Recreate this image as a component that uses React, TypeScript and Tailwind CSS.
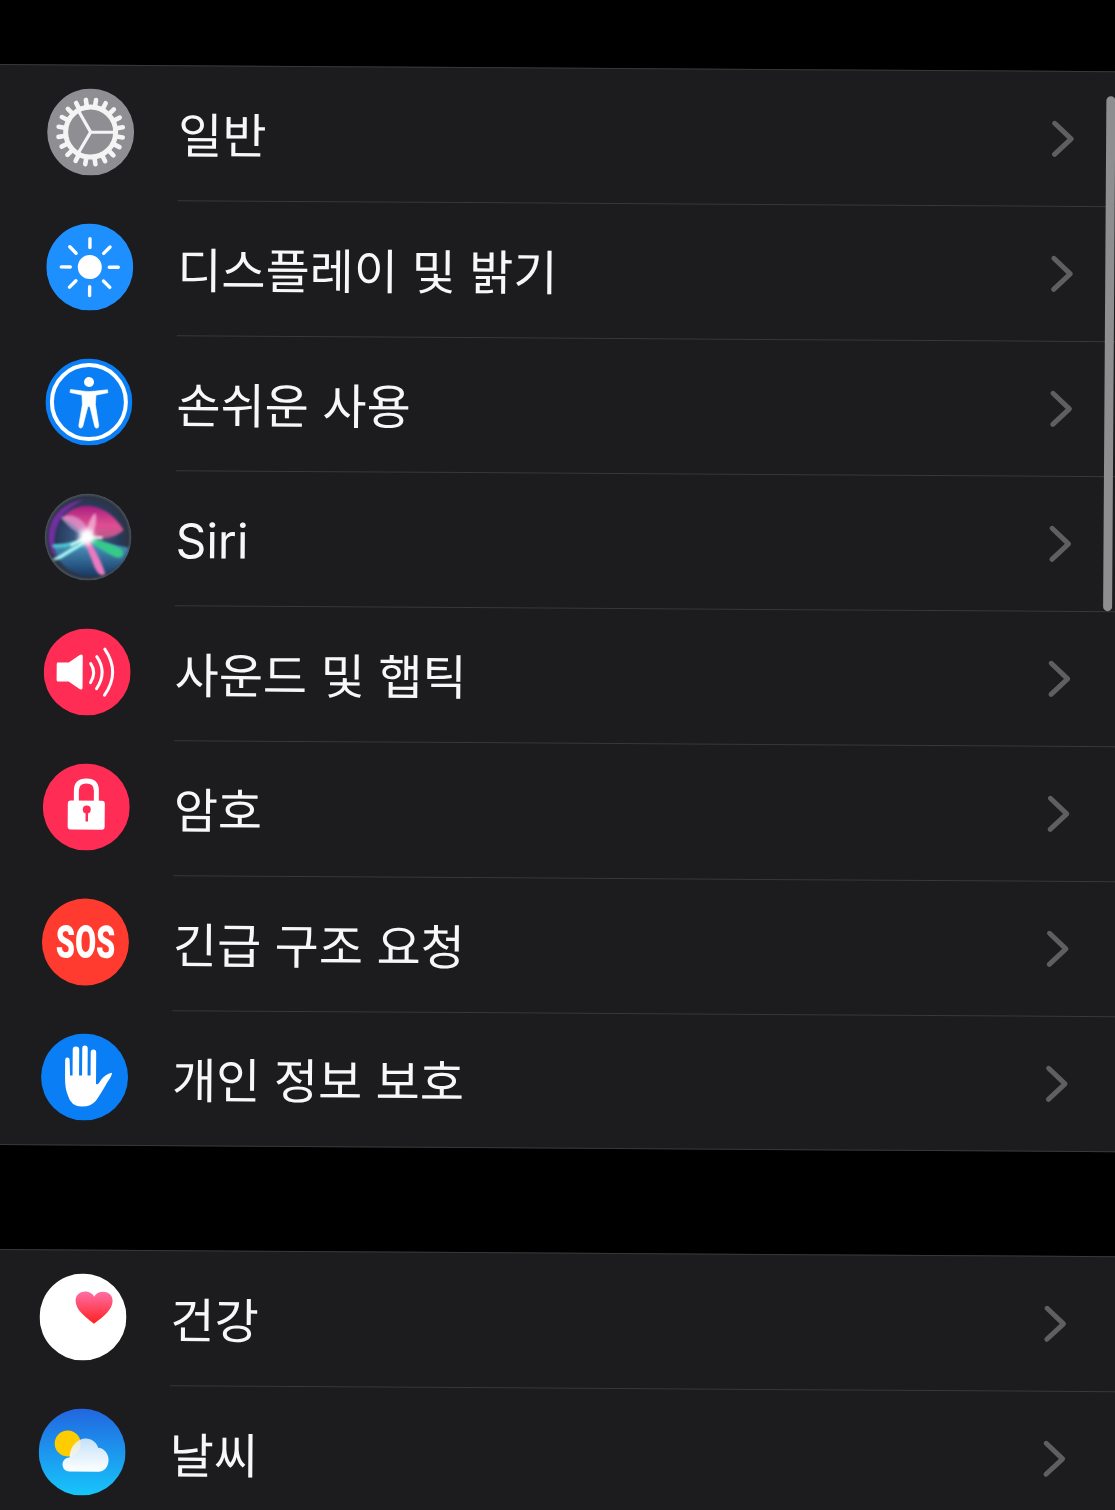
import React from "react";

const C = 43.5;

function Gear() {
  const teeth = Array.from({ length: 20 }, (_, i) => (i * 18 * Math.PI) / 180 + 0.16);
  return (
    <svg viewBox="0 0 87 87" className="w-[87px] h-[87px] block">
      <circle cx={C} cy={C} r={43.5} fill="#8e8e93" />
      <circle cx={C} cy={C} r={25} fill="none" stroke="#f4f4f5" strokeWidth={5} />
      {teeth.map((a, i) => (
        <line key={i} x1={C + 25 * Math.cos(a)} y1={C + 25 * Math.sin(a)} x2={C + 32.5 * Math.cos(a)} y2={C + 32.5 * Math.sin(a)} stroke="#f4f4f5" strokeWidth={4.6} strokeLinecap="round" />
      ))}
      <path d="M43.5 43.5 L68 43.5 M43.5 43.5 L31 22 M43.5 43.5 L31 65" stroke="#f4f4f5" strokeWidth={3.2} fill="none" />
    </svg>
  );
}

function Sun() {
  const rays = Array.from({ length: 8 }, (_, i) => (i * 45 * Math.PI) / 180);
  return (
    <svg viewBox="0 0 87 87" className="w-[87px] h-[87px] block">
      <circle cx={C} cy={C} r={43.5} fill="#1e8fff" />
      <circle cx={C} cy={C} r={12} fill="#fff" />
      {rays.map((a, i) => (
        <line key={i} x1={C + 19.5 * Math.cos(a)} y1={C + 19.5 * Math.sin(a)} x2={C + 28.5 * Math.cos(a)} y2={C + 28.5 * Math.sin(a)} stroke="#fff" strokeWidth={3.4} strokeLinecap="round" />
      ))}
    </svg>
  );
}

function Access() {
  return (
    <svg viewBox="0 0 87 87" className="w-[87px] h-[87px] block">
      <circle cx={C} cy={C} r={43.5} fill="#0a7ff5" />
      <circle cx={C} cy={C} r={37} fill="none" stroke="#fff" strokeWidth={4} />
      <circle cx={C} cy={23.5} r={5} fill="#fff" />
      <path d="M25 31 L37 32.5 Q43.5 33.5 50 32.5 L62 31 L62.5 34 L50.5 36.5 L50 46 L53.5 67 Q53.5 69.5 51.5 69.5 Q50 69.5 49.5 68 L44.5 48 L42.5 48 L37.5 68 Q37 69.5 35.5 69.5 Q33.5 69.5 33.5 67 L37 46 L36.5 36.5 L24.5 34 Z" fill="#fff" stroke="#fff" strokeWidth={0.6} strokeLinejoin="round" />
    </svg>
  );
}

function Siri() {
  return (
    <svg viewBox="0 0 87 87" className="w-[87px] h-[87px] block">
      <defs>
        <clipPath id="siriClip"><circle cx={C} cy={C} r={43.5} /></clipPath>
        <radialGradient id="siriBg" cx="50%" cy="50%" r="50%">
          <stop offset="0%" stopColor="#4a6a9a" />
          <stop offset="72%" stopColor="#263a5c" />
          <stop offset="92%" stopColor="#2c3444" />
          <stop offset="100%" stopColor="#4c555c" />
        </radialGradient>
        <linearGradient id="siriTop" x1="0" y1="0" x2="0" y2="1">
          <stop offset="0%" stopColor="#a81e7e" />
          <stop offset="60%" stopColor="#e04e92" />
          <stop offset="100%" stopColor="#b85a8a" />
        </linearGradient>
        <linearGradient id="siriLow" x1="0" y1="0" x2="0" y2="1">
          <stop offset="0%" stopColor="#4a97c0" />
          <stop offset="100%" stopColor="#1a3a66" />
        </linearGradient>
        <filter id="b1" x="-30%" y="-30%" width="160%" height="160%"><feGaussianBlur stdDeviation="1" /></filter>
        <filter id="b2" x="-60%" y="-60%" width="220%" height="220%"><feGaussianBlur stdDeviation="2.5" /></filter>
      </defs>
      <g clipPath="url(#siriClip)">
        <circle cx={C} cy={C} r={43.5} fill="url(#siriBg)" />
        <path d="M4 44 C4 20 22 8 40 6 C22 14 12 26 10 44 C9 52 10 60 14 66 C8 62 4 54 4 44 Z" fill="#7a2fa8" opacity={0.9} filter="url(#b1)" />
        <path d="M18 26 C26 8 60 4 79 36 C72 44 58 46 48 44 C36 40 28 28 18 26 Z" fill="url(#siriTop)" filter="url(#b1)" />
        <path d="M9 52 C25 52 50 46 84 54 C82 72 62 84 42 82 C24 80 12 68 9 52 Z" fill="url(#siriLow)" filter="url(#b1)" />
        <path d="M16 24 C30 18 40 26 47 43 C36 44 24 34 16 24 Z" fill="#dcb0e0" opacity={0.6} filter="url(#b1)" />
        <path d="M40 42 C44 28 49 18 51 20 C53 28 50 36 46 45 Z" fill="#f8c0e0" opacity={0.7} filter="url(#b1)" />
        <path d="M44 43 C54 46 68 50 78 56 C81 64 74 66 68 62 C60 58 50 52 44 46 Z" fill="#34c98a" filter="url(#b1)" />
        <path d="M44 42 C32 52 18 60 8 66 C10 68 16 66 20 63 C28 58 38 52 46 46 Z" fill="#a8fbf6" filter="url(#b1)" />
        <path d="M8 51 C20 51 32 48 42 42 L44 46 C32 52 20 55 8 54 Z" fill="#4ed6d8" opacity={0.85} filter="url(#b1)" />
        <path d="M42 44 C50 54 57 68 61 80 C57 84 53 79 50 73 C46 62 42 54 39 46 Z" fill="#ee78c0" filter="url(#b1)" />
        <circle cx={42} cy={43.5} r={8} fill="#fff" filter="url(#b2)" />
        <path d="M26 52 L42 44 L58 44" stroke="#fff" strokeWidth={3} fill="none" opacity={0.8} filter="url(#b1)" />
      </g>
    </svg>
  );
}

function Speaker() {
  return (
    <svg viewBox="0 0 87 87" className="w-[87px] h-[87px] block">
      <circle cx={C} cy={C} r={43.5} fill="#ff2d55" />
      <path d="M14.5 34 L25 34 L36 26.5 Q39 25 39 28 L39 59 Q39 62 36 60.5 L25 53 L14.5 53 Q13 53 13 51.5 L13 35.5 Q13 34 14.5 34 Z" fill="#fff" />
      <path d="M47 35 Q53 43.5 47 54 M53 28 Q64 43.5 53 60 M61 20.5 Q77 43.5 61 66.5" fill="none" stroke="#fff" strokeWidth={3} strokeLinecap="round" />
    </svg>
  );
}

function Lock() {
  return (
    <svg viewBox="0 0 87 87" className="w-[87px] h-[87px] block">
      <circle cx={C} cy={C} r={43.5} fill="#ff2d55" />
      <path d="M33.5 38 L33.5 27 Q33.5 17.5 43.5 17.5 Q53.5 17.5 53.5 27 L53.5 38" fill="none" stroke="#fff" strokeWidth={5} />
      <rect x={25} y={37} width={37} height={29} rx={3} fill="#fff" />
      <circle cx={44} cy={46} r={4} fill="#ff2d55" />
      <rect x={42.8} y={47} width={2.5} height={11} fill="#ff2d55" />
    </svg>
  );
}

function Sos() {
  return (
    <div className="w-[87px] h-[87px] rounded-full bg-[#ff3b30] flex items-center justify-center overflow-hidden">
      <span className="font-['Roboto',sans-serif] font-black text-[45px] leading-none text-white scale-x-[0.68] tracking-[0px]">SOS</span>
    </div>
  );
}

function Hand() {
  return (
    <svg viewBox="0 0 87 87" className="w-[87px] h-[87px] block">
      <circle cx={C} cy={C} r={43.5} fill="#0a7ff5" />
      <path d="M24 27 Q24 24 26 24 Q28.5 24 28.5 27 L29 42 L31.5 42 L31.5 16 Q31.5 13 34.5 13 Q38 13 38 16 L38 42 L41 42 L41 15 Q41 12 43.5 12 Q46.5 12 46.5 15 L46.5 42 L49.5 42 L49.5 19 Q49.5 16 52 16 Q55 16 55 19 L55 50 Q57 52 60 46 Q65 40 71 39 Q71 42 66 49 Q60 60 55 67 Q50 73 41 73 Q30 73 27 62 Q24 55 24 45 Z" fill="#fff" />
    </svg>
  );
}

function Health() {
  return (
    <svg viewBox="0 0 87 87" className="w-[87px] h-[87px] block">
      <defs>
        <linearGradient id="heart" x1="0" y1="0" x2="0" y2="1">
          <stop offset="0%" stopColor="#ff6fa8" />
          <stop offset="100%" stopColor="#ff2020" />
        </linearGradient>
      </defs>
      <circle cx={C} cy={C} r={43.5} fill="#fff" />
      <path d="M54.5 50 C45 43 36 36 36 27 C36 21 41 18 45.5 18 C49.5 18 53 20 54.5 23 C56 20 59.5 18 63.5 18 C68 18 73 21 73 27 C73 36 64 43 54.5 50 Z" fill="url(#heart)" />
    </svg>
  );
}

function Weather() {
  return (
    <svg viewBox="0 0 87 87" className="w-[87px] h-[87px] block">
      <defs>
        <linearGradient id="sky" x1="0" y1="0" x2="0" y2="1">
          <stop offset="0%" stopColor="#2266e0" />
          <stop offset="100%" stopColor="#17c6fb" />
        </linearGradient>
        <linearGradient id="cloud" x1="0" y1="0" x2="0" y2="1">
          <stop offset="0%" stopColor="#e4f0fb" stopOpacity={0.85} />
          <stop offset="100%" stopColor="#ffffff" />
        </linearGradient>
      </defs>
      <circle cx={C} cy={C} r={43.5} fill="url(#sky)" />
      <circle cx={29} cy={35} r={13} fill="#ffcc00" />
      <path d="M31 63 C26 63 24 59 24 56 C24 52 27 49 31 49 C31 38 39 30 47 30 C53 30 58 34 59.5 39 C65 39 70 45 70 51 C70 59 65 63 60 63 Z" fill="url(#cloud)" />
    </svg>
  );
}

function Chevron() {
  return (
    <svg viewBox="0 0 24 38" className="w-[24px] h-[38px] block shrink-0 -mt-[1px]" fill="none">
      <path d="M3.5 3.5 L20 19 L3.5 34.5" stroke="#5f5f62" strokeWidth={5} strokeLinecap="round" strokeLinejoin="round" />
    </svg>
  );
}

function Row({ icon, label, last }: { icon: React.ReactNode; label: string; last?: boolean }) {
  return (
    <div className="flex items-center h-[135px] pl-[48px]">
      <div className="w-[87px] h-[87px] shrink-0 -mt-[2px]">{icon}</div>
      <div className={`ml-[44px] flex-1 h-full flex items-center justify-between pr-[64px] ${last ? "" : "border-b border-[#38383a]"}`}>
        <span className="text-[48px] leading-none text-[#f7f7f9] font-normal mt-[5px]">{label}</span>
        <Chevron />
      </div>
    </div>
  );
}

export default function App() {
  return (
    <div className="w-[1115px] h-[1510px] bg-black overflow-hidden">
      <div className="relative w-[1140px] h-[1530px] bg-black rotate-[0.37deg] origin-top-left pt-[64px] font-['Inter','Noto_Sans_CJK_KR',sans-serif]">
        <section className="h-[1081px] bg-[#1c1c1e] border-y border-[#38383a]">
          <Row icon={<Gear />} label="일반" />
          <Row icon={<Sun />} label="디스플레이 및 밝기" />
          <Row icon={<Access />} label="손쉬운 사용" />
          <Row icon={<Siri />} label="Siri" />
          <Row icon={<Speaker />} label="사운드 및 햅틱" />
          <Row icon={<Lock />} label="암호" />
          <Row icon={<Sos />} label="긴급 구조 요청" />
          <Row icon={<Hand />} label="개인 정보 보호" last />
        </section>
        <section className="mt-[104px] bg-[#1c1c1e] border-t border-[#38383a]">
          <Row icon={<Health />} label="건강" />
          <Row icon={<Weather />} label="날씨" />
        </section>
        <div className="absolute left-[1107px] top-[89px] w-[9px] h-[515px] rounded-full bg-[#8e8e90]" />
      </div>
    </div>
  );
}
